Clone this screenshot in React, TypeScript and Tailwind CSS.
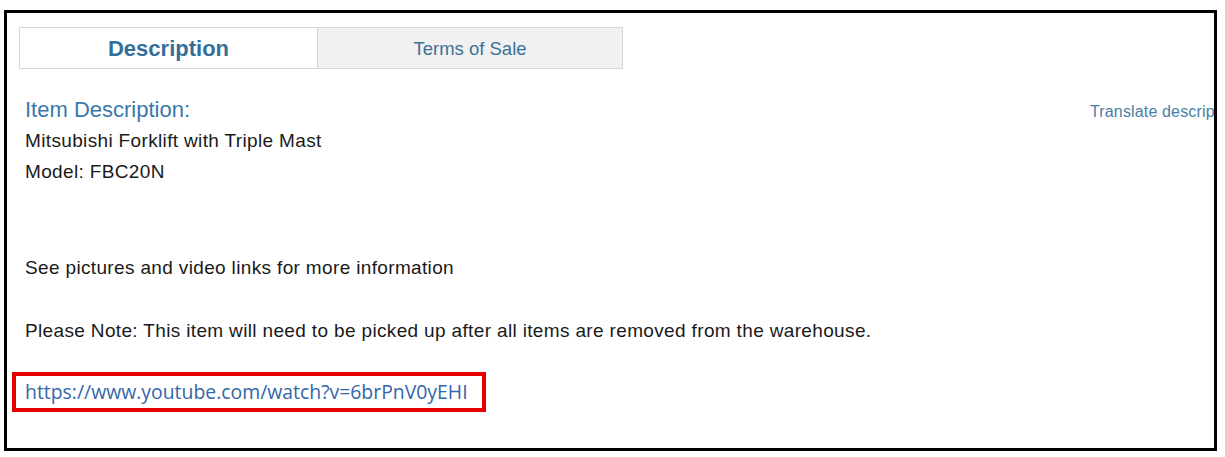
import React from "react";

const tabs = [
  { label: "Description", active: true },
  { label: "Terms of Sale", active: false },
];

const App: React.FC = () => {
  return (
    <div className="w-[1225px] h-[457px] bg-white overflow-hidden font-['Liberation_Sans',Arial,sans-serif]">
      <div className="ml-[4px] mt-[10px] w-[1213px] h-[441px] border-[3px] border-black overflow-hidden">
        {/* Tabs */}
        <div className="ml-[12px] mt-[14px] flex w-[604px] h-[42px] border border-[#d6d6d6]">
          {tabs.map((tab) => (
            <div
              key={tab.label}
              className={
                tab.active
                  ? "w-[298px] flex items-center justify-center pt-[1px] bg-white text-[#336f99] text-[22px] font-bold border-r border-[#d6d6d6]"
                  : "flex-1 flex items-center justify-center pt-[1px] bg-[#f1f1f1] text-[#3d7298] text-[18.5px]"
              }
            >
              {tab.label}
            </div>
          ))}
        </div>

        {/* Description body */}
        <div className="pl-[18px] pt-[26px] text-[19px] tracking-[0.35px] text-[#1a1a1a]">
          <div className="flex items-center justify-between h-[30px]">
            <span className="text-[22px] tracking-normal text-[#3b78aa] leading-[30px]">Item Description:</span>
            <span className="text-[16px] tracking-[0.15px] text-[#4a7ea3] whitespace-nowrap w-[124px] overflow-hidden mt-[4px]">
              Translate description
            </span>
          </div>
          <div className="leading-[31px]">
            <p>Mitsubishi Forklift with Triple Mast</p>
            <p>Model: FBC20N</p>
            <p className="mt-[65px]">See pictures and video links for more information</p>
            <p className="mt-[32px]">Please Note: This item will need to be picked up after all items are removed from the warehouse.</p>
          </div>
          <div className="-ml-[13px] mt-[26px] w-[474px] h-[40px] border-[4px] border-[#e60000] flex items-center pl-[9px]">
            <a
              href="#"
              className="text-[19.4px] tracking-normal text-[#3366aa] font-['Open_Sans','Noto_Sans',sans-serif] whitespace-nowrap"
            >
              https://www.youtube.com/watch?v=6brPnV0yEHI
            </a>
          </div>
        </div>
      </div>
    </div>
  );
};

export default App;
